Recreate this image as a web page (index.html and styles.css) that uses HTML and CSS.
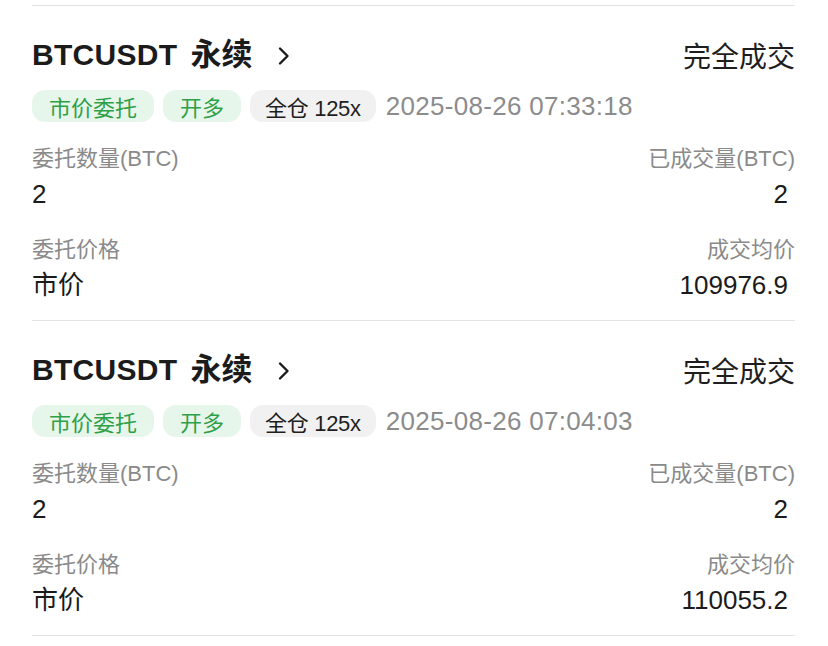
FILE: index.html
```html
<!DOCTYPE html>
<html lang="zh-CN">
<head>
<meta charset="utf-8">
<title>订单</title>
<link rel="stylesheet" href="styles.css">
</head>
<body>
<div class="list">
  <div class="card">
    <div class="head">
      <div class="title"><span class="name">BTCUSDT<span class="kind">永续</span></span>
        <svg class="chev" width="16" height="22" viewBox="0 0 16 22"><path d="M4 3.5 L11.5 11 L4 18.5" fill="none" stroke="#1b1b1b" stroke-width="2.4" stroke-linecap="round" stroke-linejoin="round"/></svg>
      </div>
      <div class="status">完全成交</div>
    </div>
    <div class="tags">
      <span class="tag green">市价委托</span>
      <span class="tag green">开多</span>
      <span class="tag gray">全仓 125x</span>
      <span class="time">2025-08-26 07:33:18</span>
    </div>
    <div class="stats">
      <div class="stat"><div class="label">委托数量(BTC)</div><div class="value">2</div></div>
      <div class="stat right"><div class="label">已成交量(BTC)</div><div class="value">2</div></div>
      <div class="stat"><div class="label">委托价格</div><div class="value">市价</div></div>
      <div class="stat right"><div class="label">成交均价</div><div class="value">109976.9</div></div>
    </div>
  </div>
  <div class="card">
    <div class="head">
      <div class="title"><span class="name">BTCUSDT<span class="kind">永续</span></span>
        <svg class="chev" width="16" height="22" viewBox="0 0 16 22"><path d="M4 3.5 L11.5 11 L4 18.5" fill="none" stroke="#1b1b1b" stroke-width="2.4" stroke-linecap="round" stroke-linejoin="round"/></svg>
      </div>
      <div class="status">完全成交</div>
    </div>
    <div class="tags">
      <span class="tag green">市价委托</span>
      <span class="tag green">开多</span>
      <span class="tag gray">全仓 125x</span>
      <span class="time">2025-08-26 07:04:03</span>
    </div>
    <div class="stats">
      <div class="stat"><div class="label">委托数量(BTC)</div><div class="value">2</div></div>
      <div class="stat right"><div class="label">已成交量(BTC)</div><div class="value">2</div></div>
      <div class="stat"><div class="label">委托价格</div><div class="value">市价</div></div>
      <div class="stat right"><div class="label">成交均价</div><div class="value">110055.2</div></div>
    </div>
  </div>
</div>
</body>
</html>
```

FILE: styles.css
```css
html, body {
  margin: 0;
  padding: 0;
  background: #ffffff;
}
body {
  font-family: "Liberation Sans", "Noto Sans CJK SC", sans-serif;
  color: #1b1b1b;
  padding: 5px 33px 0 32px;
}
.list {
  border-top: 1.5px solid #e3e3e3;
}
.card {
  border-bottom: 1.5px solid #e3e3e3;
  padding: 29px 0 19px;
}
.head {
  display: flex;
  justify-content: space-between;
  align-items: center;
  height: 40px;
}
.title {
  display: flex;
  align-items: center;
}
.name {
  font-size: 30px;
  font-weight: bold;
  letter-spacing: 0.3px;
  line-height: 40px;
}
.kind {
  font-size: 31px;
  margin-left: 13px;
  letter-spacing: 0;
}
.chev {
  margin-left: 24px;
  margin-top: 2px;
}
.status {
  font-size: 28px;
  color: #1e1e1e;
}
.tags {
  display: flex;
  align-items: center;
  margin-top: 15px;
  height: 32px;
}
.tag {
  display: inline-flex;
  align-items: center;
  height: 32px;
  padding: 0 17px;
  border-radius: 13px;
  font-size: 22px;
  margin-right: 9px;
}
.tag.green {
  background: #e7f6ea;
  color: #2f9f48;
}
.tag.gray {
  background: #f1f1f1;
  color: #1e1e1e;
  padding: 0 15px;
  letter-spacing: -0.3px;
}
.time {
  font-size: 26px;
  color: #8c8c8c;
  margin-left: 1px;
  letter-spacing: 0.3px;
}
.stats {
  display: grid;
  grid-template-columns: 1fr 1fr;
  row-gap: 25px;
  margin-top: 22px;
}
.stat.right {
  text-align: right;
}
.label {
  font-size: 22px;
  line-height: 30px;
  color: #8a8a8a;
}
.value {
  font-size: 26px;
  line-height: 32px;
  margin-top: 4px;
  color: #1b1b1b;
}
.stat.right .value {
  padding-right: 7px;
}
```
